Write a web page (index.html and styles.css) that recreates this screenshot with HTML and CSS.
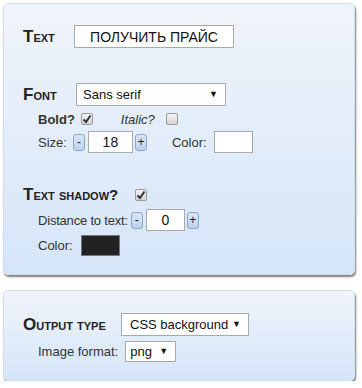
FILE: index.html
```html
<!DOCTYPE html>
<html lang="en">
<head>
  <meta charset="UTF-8">
  <title>Button generator</title>
  <link rel="stylesheet" href="styles.css">
</head>
<body>
  <div class="panel panel-main">
    <div class="row row-text">
      <h2 class="head head-text">Text</h2>
      <input class="field field-text" type="text" value="ПОЛУЧИТЬ ПРАЙС">
    </div>

    <div class="row row-font">
      <h2 class="head head-font">Font</h2>
      <span class="select select-font">Sans serif<span class="arrow">▼</span></span>
    </div>
    <div class="sub sub-style">
      <span class="lbl bold">Bold?</span>
      <span class="check on"><svg width="10" height="10" viewBox="0 0 10 10"><path d="M1.5 5.5 L4 8 L8.5 1.5" fill="none" stroke="#333" stroke-width="2"/></svg></span>
      <span class="lbl italic">Italic?</span>
      <span class="check"></span>
    </div>
    <div class="sub sub-size">
      <span class="lbl">Size:</span>
      <span class="spin">-</span>
      <input class="field field-num" type="text" value="18">
      <span class="spin">+</span>
      <span class="lbl lbl-color">Color:</span>
      <span class="swatch swatch-white"></span>
    </div>

    <div class="row row-shadow">
      <h2 class="head">Text shadow?</h2>
      <span class="check on"><svg width="10" height="10" viewBox="0 0 10 10"><path d="M1.5 5.5 L4 8 L8.5 1.5" fill="none" stroke="#333" stroke-width="2"/></svg></span>
    </div>
    <div class="sub sub-dist">
      <span class="lbl">Distance to text:</span>
      <span class="spin">-</span>
      <input class="field field-num field-dist" type="text" value="0">
      <span class="spin">+</span>
    </div>
    <div class="sub sub-shcolor">
      <span class="lbl">Color:</span>
      <span class="swatch swatch-black"></span>
    </div>
  </div>

  <div class="panel panel-out">
    <div class="row row-out">
      <h2 class="head head-out">Output type</h2>
      <span class="select select-out">CSS background<span class="arrow">▼</span></span>
    </div>
    <div class="sub sub-format">
      <span class="lbl">Image format:</span>
      <span class="select select-fmt">png<span class="arrow">▼</span></span>
    </div>
  </div>
</body>
</html>
```

FILE: styles.css
```css
* { box-sizing: border-box; }

body {
  margin: 0;
  padding: 3px 0 0 3px;
  background: #fff;
  font-family: "Liberation Sans", Arial, sans-serif;
  font-size: 13px;
  color: #333;
}

.panel {
  width: 352px;
  border: 1px solid #d3deea;
  border-radius: 5px;
  background: linear-gradient(to bottom, #f0f4fa 0%, #d5e5f9 100%);
  box-shadow: 1px 2px 2px #7d7d7d;
  padding: 0 0 0 19px;
}

.panel-main {
  height: 272px;
  padding-top: 21px;
}

.panel-out {
  margin-top: 15px;
  height: 91px;
  padding-top: 22px;
}

.row {
  display: flex;
  align-items: center;
}

.head {
  margin: 0;
  font-size: 15px;
  font-weight: 700;
  font-variant: small-caps;
  color: #222;
  line-height: 23px;
}

.head::first-letter { font-size: 17px; }

.head-text { width: 51px; }
.head-font { width: 53px; }
.head-out { width: 98px; }

.row-font { margin-top: 35px; }
.row-shadow { margin-top: 30px; }
.row-shadow .head { width: 112px; }

.field {
  font-family: "Liberation Sans", Arial, sans-serif;
  border: 1px solid #a9a9a9;
  background: #fff;
  color: #111;
  outline: none;
  padding: 0;
}

.field-text {
  width: 160px;
  height: 23px;
  font-size: 14px;
  text-align: center;
}

.select {
  position: relative;
  display: inline-block;
  background: #fff;
  border: 1px solid #a9a9a9;
  font-size: 13px;
  color: #111;
  height: 23px;
  line-height: 21px;
  padding-left: 6px;
}

.arrow {
  position: absolute;
  right: 7px;
  top: 0;
  font-size: 9px;
  color: #111;
}

.select-font { width: 150px; }
.select-out { width: 128px; padding-left: 8px; }
.select-fmt { width: 51px; height: 21px; line-height: 19px; padding-left: 4px; }

.sub {
  display: flex;
  align-items: center;
  padding-left: 15px;
}

.lbl { color: #333; }
.bold { font-weight: 700; margin-right: 6px; }
.italic { font-style: italic; margin: 0 11px 0 28px; }

.sub-style { margin-top: 6px; height: 14px; }
.sub-size { margin-top: 5px; }
.sub-size .lbl:first-child { margin-right: 6px; }
.lbl-color { margin: 0 7px 0 25px; }
.sub-dist { margin-top: 3px; }
.sub-dist .lbl { margin-right: 3px; letter-spacing: -0.2px; }
.sub-shcolor { margin-top: 4px; }
.sub-shcolor .lbl { margin-right: 8px; }
.sub-format { margin-top: 5px; }
.sub-format .lbl { margin-right: 7px; }

.check {
  display: inline-flex;
  align-items: center;
  justify-content: center;
  width: 12px;
  height: 12px;
  border: 1px solid #9a9a9a;
  border-radius: 2px;
  background: linear-gradient(to bottom, #f2f2f2, #d4d4d4);
}

.spin {
  display: inline-flex;
  align-items: center;
  justify-content: center;
  width: 12px;
  height: 17px;
  border: 1px solid #8fa6c0;
  border-radius: 3px;
  background: linear-gradient(to bottom, #d7e6f6, #bcd3ee);
  font-size: 12px;
  color: #222;
  line-height: 1;
}

.field-num {
  width: 45px;
  height: 22px;
  margin: 0 2px 0 3px;
  font-size: 14px;
  text-align: center;
}

.field-dist { width: 39px; margin: 0 2px 0 3px; }

.swatch {
  display: inline-block;
  border: 1px solid #a9a9a9;
}

.swatch-white {
  width: 39px;
  height: 22px;
  background: #fff;
}

.swatch-black {
  width: 39px;
  height: 21px;
  background: #222;
  border-color: #777;
}
```
